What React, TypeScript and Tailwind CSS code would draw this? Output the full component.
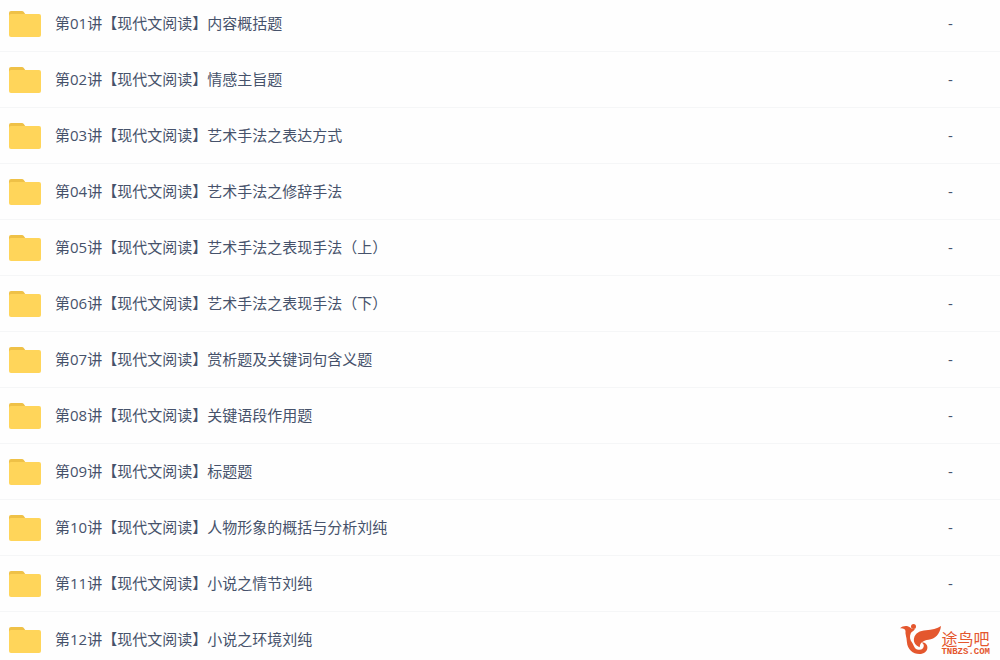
import React from "react";

interface Lesson {
  id: string;
  name: string;
  size: string;
}

const lessons: Lesson[] = [
  { id: "01", name: "第01讲【现代文阅读】内容概括题", size: "-" },
  { id: "02", name: "第02讲【现代文阅读】情感主旨题", size: "-" },
  { id: "03", name: "第03讲【现代文阅读】艺术手法之表达方式", size: "-" },
  { id: "04", name: "第04讲【现代文阅读】艺术手法之修辞手法", size: "-" },
  { id: "05", name: "第05讲【现代文阅读】艺术手法之表现手法（上）", size: "-" },
  { id: "06", name: "第06讲【现代文阅读】艺术手法之表现手法（下）", size: "-" },
  { id: "07", name: "第07讲【现代文阅读】赏析题及关键词句含义题", size: "-" },
  { id: "08", name: "第08讲【现代文阅读】关键语段作用题", size: "-" },
  { id: "09", name: "第09讲【现代文阅读】标题题", size: "-" },
  { id: "10", name: "第10讲【现代文阅读】人物形象的概括与分析刘纯", size: "-" },
  { id: "11", name: "第11讲【现代文阅读】小说之情节刘纯", size: "-" },
  { id: "12", name: "第12讲【现代文阅读】小说之环境刘纯", size: "" },
];

const FolderIcon = () => (
  <svg width="32" height="28" viewBox="0 0 32 28" aria-hidden="true" className="shrink-0">
    <path d="M0 4a2 2 0 0 1 2-2h11a2 2 0 0 1 1.6.8L17 6v4H0z" fill="#efc147" />
    <rect y="5" width="32" height="23" rx="2" fill="#ffd55a" />
  </svg>
);

const BirdLogo = () => (
  <svg width="41" height="32" viewBox="0 0 41 32" aria-hidden="true" fill="#e4572e">
    {/* crest */}
    <circle cx="13.5" cy="2.6" r="2.5" />
    {/* head and breast */}
    <path d="M0 4.300C3 1.500 7.500 1 10.500 3.800c1.200 1.200 2.800 1.500 4.500.9-1 2.300-3.200 2.600-4.200 4.600-1.500 3.200-1 7 1.700 10 1.500 2.500 2 6 6 6.500 3.500.4 5.500-1.800 5.300-4.200-.1-1.600-1-2.600-2.600-3.100 3.500-.6 6.300 1.600 6.200 5 0 4-3.500 6.500-8 6.500-6.500 0-12-4.500-12.500-12C6.700 13 5 10 5.500 7 5.300 4.800 2.500 3.800 0 4.300z" />
    {/* wing */}
    <path d="M41 2c-1 8.500-6 12.800-12.500 13.800-5 .8-8.500 2.500-8.800 7.400-4-1.500-6.500-5-5.700-8.700C15 9 20 6.800 26 6.300 32 5.800 37 5 41 2z" />
  </svg>
);

const App = () => {
  return (
    <main className="relative h-screen overflow-hidden bg-[#fefefe] font-['Open_Sans','Noto_Sans_CJK_SC',sans-serif]">
      <table className="-mt-[5px] w-full table-fixed border-collapse text-[15px] leading-5 text-[#46526b]">
        <tbody>
          {lessons.map((lesson) => (
            <tr key={lesson.id} className="h-14 border-b border-[#f5f6f7]">
              <td className="p-0 pl-[9px]">
                <a href={`#lesson-${lesson.id}`} className="flex items-center gap-[14px]">
                  <FolderIcon />
                  <span>{lesson.name}</span>
                </a>
              </td>
              <td className="w-[52px] p-0">{lesson.size}</td>
            </tr>
          ))}
        </tbody>
      </table>

      {/* site mark, floats over the list */}
      <div className="absolute right-[10px] bottom-1 flex items-end text-[#e4572e]">
        <BirdLogo />
        <div className="flex flex-col">
          <span className="text-base leading-[18px]">途鸟吧</span>
          <span className="font-['Liberation_Mono',monospace] text-[9px] leading-2 font-bold">TNBZS.COM</span>
        </div>
      </div>
    </main>
  );
};

export default App;
